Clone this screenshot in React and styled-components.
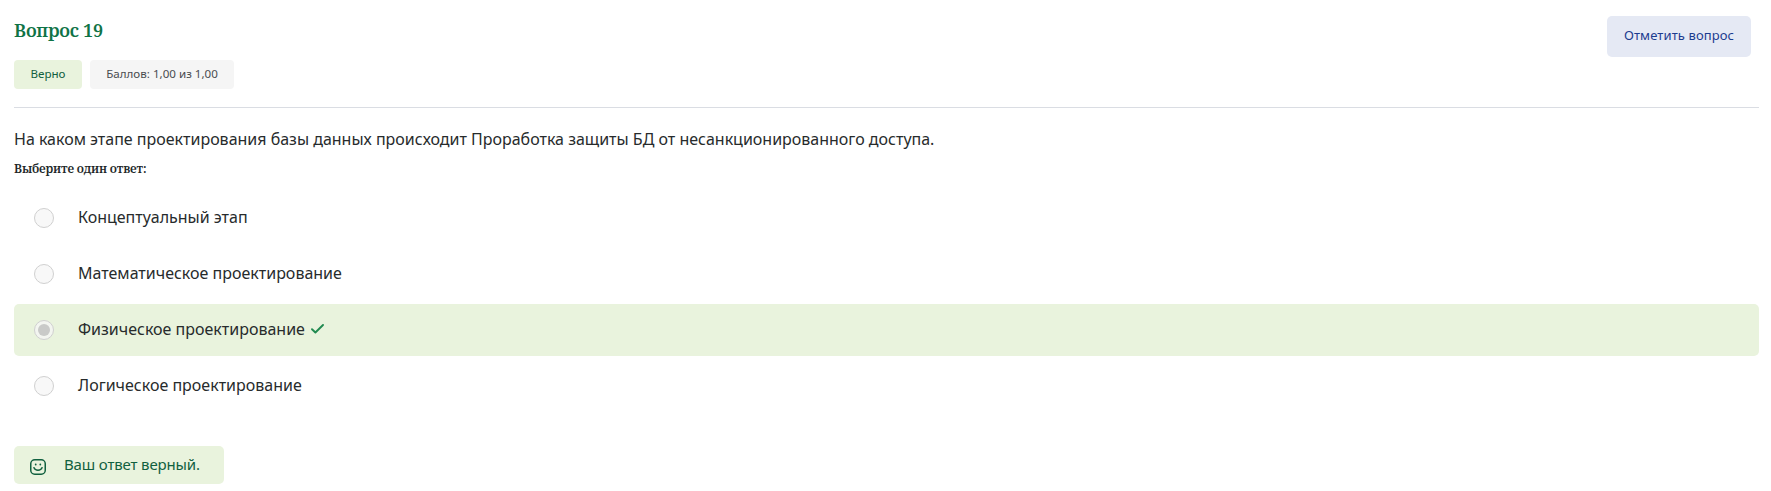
import React from 'react';
import styled, { createGlobalStyle } from 'styled-components';

const sans = '"Noto Sans", "Open Sans", sans-serif';
const serif = '"Noto Serif", "DejaVu Serif Condensed", "Liberation Serif", serif';

const GlobalStyle = createGlobalStyle`
  *, *::before, *::after { box-sizing: border-box; }
  body {
    margin: 0;
    background: #fff;
    color: #272b2c;
    font-family: ${sans};
    font-size: 16px;
  }
`;

const Page = styled.main`
  display: flex;
  flex-direction: column;
  padding: 0 12px 0 14px;
`;

const Header = styled.header`
  display: flex;
  justify-content: space-between;
  align-items: flex-start;
  height: 108px;
  padding: 16px 8px 0 0;
  border-bottom: 1px solid #dadde3;
`;

const Title = styled.h1`
  margin: 0 0 16px;
  font: 600 18px/28px ${serif};
  letter-spacing: -0.27px;
  color: #0f7346;
`;

const Pills = styled.div`
  display: flex;
  gap: 8px;
`;

const Pill = styled.span`
  display: flex;
  align-items: center;
  justify-content: center;
  width: ${(p) => p.$width}px;
  height: 29px;
  padding-bottom: 2px;
  border-radius: 4px;
  font-size: 11.6px;
  white-space: nowrap;
  background: ${(p) => (p.$correct ? '#e9f3dd' : '#f5f5f5')};
  color: ${(p) => (p.$correct ? '#11603f' : '#4a4c50')};
`;

const FlagButton = styled.button`
  display: flex;
  align-items: center;
  justify-content: center;
  width: 144px;
  height: 41px;
  padding: 0 0 3px;
  border: 0;
  border-radius: 5px;
  background: #e5e9f4;
  color: #1c3c8f;
  font: 400 13px ${sans};
  letter-spacing: 0.1px;
  white-space: nowrap;
`;

const Question = styled.p`
  margin: 19px 0 0;
  line-height: 24px;
  letter-spacing: -0.005px;
`;

const Prompt = styled.h2`
  margin: 9px 0 14px;
  font: 600 12px/18px ${serif};
  letter-spacing: -0.17px;
  color: #222829;
`;

const Options = styled.div`
  display: flex;
  flex-direction: column;
  gap: 4px;
`;

const Option = styled.label`
  display: flex;
  align-items: center;
  height: 52px;
  padding-left: 20px;
  border-radius: 5px;
  background: ${(p) => (p.$correct ? '#e9f3dd' : 'transparent')};
`;

const Radio = styled.span`
  display: grid;
  place-items: center;
  width: 20px;
  height: 20px;
  margin-right: 24px;
  border: 1px solid #d0d0d0;
  border-radius: 50%;
  background: ${(p) => (p.$checked ? '#f3f5f0' : '#f8f8f8')};

  &::after {
    content: '';
    width: 12px;
    height: 12px;
    border-radius: 50%;
    background: ${(p) => (p.$checked ? '#c9cac8' : 'transparent')};
  }
`;

const OptionText = styled.span`
  padding-bottom: 2px;
  line-height: 24px;
`;

const Check = styled.svg`
  margin: -2px 0 0 6.5px;
`;

const Feedback = styled.div`
  display: flex;
  align-items: center;
  width: 210px;
  height: 38px;
  margin-top: 34px;
  padding-left: 16px;
  border-radius: 5px;
  background: #e9f3dd;
  color: #11603f;
`;

const Smile = styled.svg`
  margin: 4px 18px 0 0;
`;

const FeedbackText = styled.span`
  padding-bottom: 3px;
  font-size: 15px;
  line-height: 22px;
  letter-spacing: -0.15px;
  white-space: nowrap;
`;

const answers = [
  { text: 'Концептуальный этап' },
  { text: 'Математическое проектирование' },
  { text: 'Физическое проектирование', chosen: true },
  { text: 'Логическое проектирование' },
];

export default function App() {
  return (
    <>
      <GlobalStyle />
      <Page>
        <Header>
          <div>
            <Title>Вопрос 19</Title>
            <Pills>
              <Pill $correct $width={68}>Верно</Pill>
              <Pill $width={144}>Баллов: 1,00 из 1,00</Pill>
            </Pills>
          </div>
          <FlagButton type="button">Отметить вопрос</FlagButton>
        </Header>
        <Question>
          На каком этапе проектирования базы данных происходит Проработка защиты БД от
          несанкционированного доступа.
        </Question>
        <Prompt>Выберите один ответ:</Prompt>
        <Options>
          {answers.map(({ text, chosen }) => (
            <Option key={text} $correct={chosen}>
              <Radio $checked={chosen} />
              <OptionText>{text}</OptionText>
              {chosen && (
                <Check width="13" height="10" viewBox="0 0 13 10" fill="none">
                  <path
                    d="M1 5.2 4.4 8.5 12 1"
                    stroke="#218a50"
                    strokeWidth="1.9"
                    strokeLinecap="round"
                    strokeLinejoin="round"
                  />
                </Check>
              )}
            </Option>
          ))}
        </Options>
        <Feedback>
          <Smile width="16" height="16" viewBox="0 0 16 16" fill="none" stroke="#11603f">
            <rect x="0.75" y="0.75" width="14.5" height="14.5" rx="4" strokeWidth="1.5" />
            <path d="M3.9 8.6C5.2 12.2 10.8 12.2 12.1 8.6" strokeWidth="1.4" strokeLinecap="round" />
            <circle cx="5.7" cy="5.5" r="0.9" fill="#11603f" stroke="none" />
            <circle cx="10.3" cy="5.5" r="0.9" fill="#11603f" stroke="none" />
          </Smile>
          <FeedbackText>Ваш ответ верный.</FeedbackText>
        </Feedback>
      </Page>
    </>
  );
}
